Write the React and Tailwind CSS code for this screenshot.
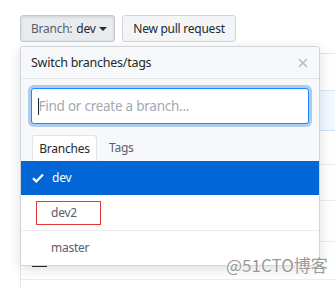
import React from "react";

const font = { fontFamily: '"Noto Sans", "Open Sans", Arial, sans-serif' };

const FileTable = () => {
  // the page content that the menu sits on top of
  const rows = [34, 36, 41, 38, 30];
  return (
    <div className="ml-[20px] mt-[11px] w-[340px] border border-[#e1e4e8] rounded-[3px]">
      <div className="h-[37px] border-b border-[#e1e4e8] bg-white" />
      <div className="h-[40px] border-b border-[#c8e1ff] bg-[#f1f8ff]" />
      {rows.map((h, i) => (
        <div
          key={i}
          style={{ height: h }}
          className="border-b border-[#eaecef] bg-white pl-[11px] flex items-start"
        >
          {i === 3 && (
            <div className="w-[15px] h-[2px] bg-[#24292e] mt-[23px]" />
          )}
        </div>
      ))}
    </div>
  );
};

const BranchMenu = () => {
  return (
    <div className="absolute left-[20px] top-[46px] w-[300px] bg-white border border-[#d1d5da] rounded-[3px] shadow-[0_3px_12px_rgba(27,31,35,0.15)] overflow-hidden tracking-[-0.25px]">
      {/* Header */}
      <div className="h-[32px] flex items-center justify-between pl-[10px] pr-[11px] bg-[#f6f8fa] border-b border-[#e1e4e8]">
        <span className="text-[12.5px] text-[#24292e] mt-[1px]">Switch branches/tags</span>
        <svg width="10" height="10" viewBox="0 0 10 10" className="mt-[1px]">
          <path d="M1 1 L9 9 M9 1 L1 9" stroke="#b9bcc0" strokeWidth="1.6" />
        </svg>
      </div>

      {/* Filter */}
      <div className="bg-[#f6f8fa] px-[10px] pt-[9px]">
        <div className="h-[36px] bg-white border border-[#2188ff] rounded-[3px] shadow-[0_0_0_3px_rgba(3,102,214,0.3)] flex items-center pl-[6px]">
          <span className="w-[1px] h-[17px] bg-[#24292e]" />
          <span className="text-[13.5px] text-[#a3aab1] ml-[-0.5px]">Find or create a branch...</span>
        </div>
        <div className="flex items-end h-[37px] pl-[1px]">
          <div className="h-[26px] w-[65px] justify-center flex items-center bg-white border border-b-0 border-[#e1e4e8] rounded-t-[3px] text-[12px] text-[#24292e]">
            Branches
          </div>
          <div className="h-[26px] pl-[12px] flex items-center text-[12px] text-[#586069]">
            Tags
          </div>
        </div>
      </div>

      {/* Branch list */}
      <div className="h-[34px] bg-[#0366d6] flex items-center pl-[11px] text-white text-[12px]">
        <svg width="12" height="10" viewBox="0 0 12 10" className="mr-[8px]">
          <path d="M1 5.2 L4.3 8.4 L11 1.4" stroke="#fff" strokeWidth="2.2" fill="none" />
        </svg>
        dev
      </div>
      <div className="relative h-[36px] bg-white border-b border-[#eaecef] flex items-center pl-[30px] text-[12px] text-[#586069]">
        dev2
        <div className="absolute left-[15px] top-[6px] w-[65px] h-[24px] border border-[#e5383b]" />
      </div>
      <div className="h-[34px] bg-white flex items-center pl-[30px] text-[12px] text-[#586069]">
        master
      </div>
    </div>
  );
};

export default function App() {
  return (
    <div className="relative w-[335px] h-[287px] overflow-hidden bg-white" style={font}>
      <div className="flex gap-[7px] pt-[15px] pl-[20px] tracking-[-0.25px]">
        <button className="h-[27px] w-[95px] pl-[10px] flex items-center bg-[#e9ecef] border border-[#c4c8cc] rounded-[3px] text-[12px] shadow-[inset_0_1px_3px_rgba(27,31,35,0.12)]">
          <span className="text-[#586069]">Branch:</span>
          <span className="text-[#24292e] ml-[4px]">dev</span>
          <span className="ml-[3px] w-0 h-0 border-x-[4px] border-x-transparent border-t-[4px] border-t-[#24292e]" />
        </button>
        <button className="h-[27px] w-[114px] justify-center flex items-center bg-[#f3f5f7] border border-[#d1d5da] rounded-[3px] text-[12px] text-[#24292e]">
          New pull request
        </button>
      </div>

      <FileTable />
      <BranchMenu />

      <div
        className="absolute left-[226px] top-[256px] text-[17px] text-[#999] leading-none"
        style={{
          fontFamily: '"Noto Sans CJK SC", "Noto Sans", sans-serif',
          textShadow: "0 0 2px #fff, 0 0 2px #fff",
        }}
      >
        @51CTO博客
      </div>
    </div>
  );
}
